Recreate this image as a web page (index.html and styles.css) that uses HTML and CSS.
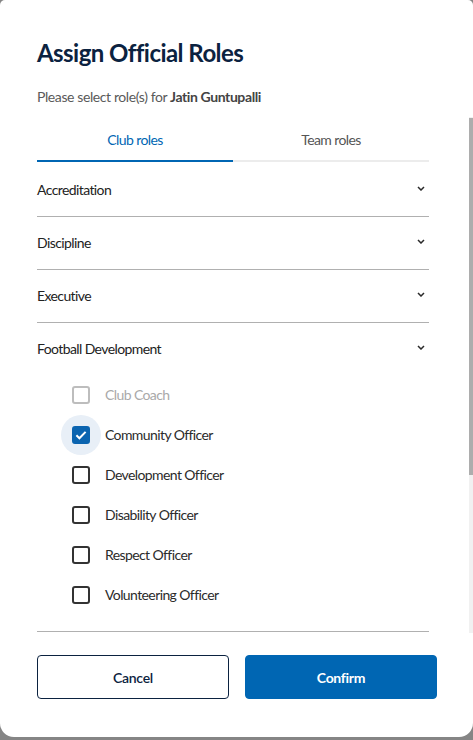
FILE: index.html
```html
<!DOCTYPE html>
<html lang="en">
<head>
<meta charset="utf-8">
<title>Assign Official Roles</title>
<link rel="stylesheet" href="styles.css">
</head>
<body>
<div class="dialog">
  <header class="head">
    <h1 class="title">Assign Official Roles</h1>
    <p class="subtitle">Please select role(s) for <strong>Jatin Guntupalli</strong></p>
  </header>
  <div class="scroll">
    <div class="scroll-content">
      <div class="tabs">
        <div class="tab active">Club roles</div>
        <div class="tab">Team roles</div>
      </div>
      <div class="accordion">
        <div class="item">
          <div class="summary"><span>Accreditation</span><svg class="chev" viewBox="0 0 8 5" width="8" height="5"><path d="M1 1l3 3 3-3"/></svg></div>
        </div>
        <div class="item">
          <div class="summary"><span>Discipline</span><svg class="chev" viewBox="0 0 8 5" width="8" height="5"><path d="M1 1l3 3 3-3"/></svg></div>
        </div>
        <div class="item">
          <div class="summary"><span>Executive</span><svg class="chev" viewBox="0 0 8 5" width="8" height="5"><path d="M1 1l3 3 3-3"/></svg></div>
        </div>
        <div class="item open">
          <div class="summary"><span>Football Development</span><svg class="chev" viewBox="0 0 8 5" width="8" height="5"><path d="M1 1l3 3 3-3"/></svg></div>
          <ul class="roles">
            <li class="role disabled"><span class="cb-wrap"><span class="box"></span></span><span class="label">Club Coach</span></li>
            <li class="role"><span class="cb-wrap focus"><span class="box checked"><svg viewBox="0 0 14 14" width="14" height="14"><path d="M2.4 7.3l3 3 6.2-6.4"/></svg></span></span><span class="label">Community Officer</span></li>
            <li class="role"><span class="cb-wrap"><span class="box"></span></span><span class="label">Development Officer</span></li>
            <li class="role"><span class="cb-wrap"><span class="box"></span></span><span class="label">Disability Officer</span></li>
            <li class="role"><span class="cb-wrap"><span class="box"></span></span><span class="label">Respect Officer</span></li>
            <li class="role"><span class="cb-wrap"><span class="box"></span></span><span class="label">Volunteering Officer</span></li>
          </ul>
        </div>
      </div>
    </div>
    <div class="scrollbar"><div class="thumb"></div></div>
  </div>
  <footer class="actions">
    <button class="btn cancel" type="button">Cancel</button>
    <button class="btn confirm" type="button">Confirm</button>
  </footer>
</div>
</body>
</html>
```
FILE: styles.css
```css
html, body {
  margin: 0;
  height: 100%;
}
body {
  background: #858585;
  font-family: Lato, "Noto Sans", sans-serif;
  overflow: hidden;
  letter-spacing: -0.6px;
}
.dialog {
  background: #fff;
  height: 737px;
  border-radius: 5px 5px 14px 14px;
  display: flex;
  flex-direction: column;
  overflow: hidden;
}
.head {
  padding: 37px 37px 10px;
}
.title {
  margin: 0;
  font-size: 24px;
  line-height: 32px;
  font-weight: 700;
  color: #0b2240;
  letter-spacing: -0.55px;
}
.subtitle {
  margin: 18px 0 0;
  font-size: 14px;
  line-height: 20px;
  color: #5a5a5a;
  letter-spacing: -0.4px;
}
.subtitle strong {
  color: #444;
  font-weight: 700;
}
.scroll {
  position: relative;
  height: 516px;
  flex: none;
  overflow: hidden;
}
.scroll-content {
  padding: 0 44px 0 37px;
}
.scrollbar {
  position: absolute;
  top: 0;
  right: 0;
  bottom: 0;
  width: 4px;
  background: #f1f1f1;
}
.thumb {
  margin-top: 1px;
  height: 357px;
  background: #adadad;
}
.tabs {
  display: flex;
}
.tab {
  flex: 1;
  text-align: center;
  font-size: 14px;
  line-height: 20px;
  padding: 13px 0 10px;
  color: #555;
  border-bottom: 2px solid #ececec;
}
.tab.active {
  color: #0066b3;
  border-bottom-color: #0066b3;
}
.accordion {
  margin-top: 2px;
}
.item {
  border-bottom: 1px solid #b0b0b0;
}
.summary {
  display: flex;
  justify-content: space-between;
  align-items: center;
  padding: 16px 4px 16px 0;
  font-size: 14px;
  line-height: 20px;
  color: #222;
}
.chev {
  margin-bottom: 3px;
}
.chev path {
  fill: none;
  stroke: #2a2a2a;
  stroke-width: 1.5;
}
.roles {
  list-style: none;
  margin: 0;
  padding: 0 0 16px 24px;
}
.role {
  height: 40px;
  display: flex;
  align-items: center;
}
.cb-wrap {
  width: 40px;
  height: 40px;
  border-radius: 50%;
  display: flex;
  align-items: center;
  justify-content: center;
}
.cb-wrap.focus {
  background: #e8eff7;
}
.box {
  width: 18px;
  height: 18px;
  box-sizing: border-box;
  border: 2px solid #333;
  border-radius: 3px;
  display: flex;
  align-items: center;
  justify-content: center;
}
.box.checked {
  background: #0a64b0;
  border-color: #0a64b0;
}
.box svg path {
  fill: none;
  stroke: #fff;
  stroke-width: 2;
}
.label {
  margin-left: 4px;
  font-size: 14px;
  line-height: 20px;
  color: #2b2b2b;
}
.role.disabled .box {
  border-color: #bdbdbd;
}
.role.disabled .label {
  color: #a9a9a9;
}
.actions {
  display: flex;
  gap: 16px;
  padding: 22px 36px 0 37px;
}
.btn {
  flex: 1;
  height: 44px;
  border-radius: 4px;
  font-family: Lato, "Noto Sans", sans-serif;
  font-size: 14px;
  letter-spacing: -0.3px;
  cursor: pointer;
}
.cancel {
  background: #fff;
  border: 1px solid #0b2240;
  color: #0b2240;
  font-weight: 600;
}
.confirm {
  background: #0066b3;
  border: 1px solid #0066b3;
  color: #fff;
  font-weight: 700;
}
```
